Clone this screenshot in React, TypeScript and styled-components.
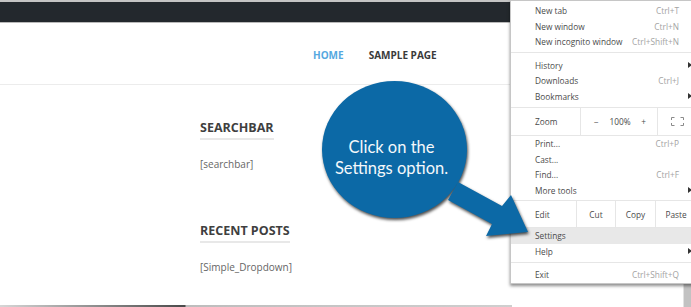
import React from 'react';
import styled, { createGlobalStyle } from 'styled-components';

const GlobalStyle = createGlobalStyle`
  html, body { margin: 0; padding: 0; background: #ffffff; }
  body {
    width: 691px;
    height: 307px;
    overflow: hidden;
    font-family: "Open Sans", "Noto Sans", sans-serif;
  }
`;

const Screen = styled.div`
  position: relative;
  width: 691px;
  height: 307px;
  overflow: hidden;
  display: grid;
  grid-template-columns: 683px 8px;
  background: #ffffff;
`;

const Page = styled.div`
  display: flex;
  flex-direction: column;
  height: 307px;
  min-width: 0;
`;

const TopStrip = styled.div`
  height: 2px;
  background: #c4c4c4;
`;

const AdminBar = styled.div`
  height: 20px;
  background: #23282d;
  border-bottom: 1px solid #b9b9b9;
`;

const Header = styled.header`
  box-sizing: border-box;
  height: 62px;
  padding: 3px 0 0 313px;
  border-bottom: 1px solid #ececec;
  display: flex;
  align-items: center;
  gap: 25px;
`;

const NavLink = styled.a<{ $active?: boolean }>`
  font-family: "Open Sans", "Noto Sans", sans-serif;
  font-weight: 700;
  font-size: 10px;
  line-height: 12px;
  color: ${(p) => (p.$active ? '#55a8df' : '#3a3a3a')};
  text-decoration: none;
`;

const Content = styled.main`
  padding: 35px 0 0 200px;
  display: flex;
  flex-direction: column;
  align-items: flex-start;
`;

const Widget = styled.section`
  display: flex;
  flex-direction: column;
  align-items: flex-start;
  & + & {
    margin-top: 52px;
  }
`;

const WidgetTitle = styled.h3`
  margin: 0;
  padding-bottom: 2.5px;
  border-bottom: 2px solid #e8e8e8;
  font-family: "Open Sans", "Noto Sans", sans-serif;
  font-weight: 700;
  font-size: 12.5px;
  line-height: 15px;
  color: #3f3f3f;
`;

const WidgetBody = styled.p`
  margin: 17.5px 0 0;
  font-family: "Open Sans", "Noto Sans", sans-serif;
  font-size: 10px;
  line-height: 14px;
  color: #666666;
`;

const BottomEdge = styled.div`
  margin-top: auto;
  width: 512px;
  height: 2px;
  background: linear-gradient(to right, #d6d6d6 0, #4a4a4a 185px, #bdbdbd 186px, #cfcfcf 100%);
`;

const Scrollbar = styled.div`
  background: #c2c2c2;
  border-left: 1px solid #e2e2e2;
`;

/* ---------- Chrome menu ---------- */

const Menu = styled.div`
  position: absolute;
  left: 510px;
  top: 0;
  width: 187px;
  background: #ffffff;
  border: 1px solid #c6c6c6;
  box-shadow: 0 2px 3px rgba(0, 0, 0, 0.45);
  font-family: "Open Sans", "Noto Sans", sans-serif;
  font-size: 8.3px;
  color: #4a4a4a;
  z-index: 2;
`;

const Group = styled.div<{ $pt: number; $pb: number }>`
  padding-top: ${(p) => p.$pt}px;
  padding-bottom: ${(p) => p.$pb}px;
`;

const Separator = styled.div`
  height: 1px;
  background: #e6e6e6;
`;

const Item = styled.div<{ $active?: boolean }>`
  display: grid;
  grid-template-columns: 1fr auto 19px;
  align-items: center;
  height: 15.5px;
  padding-left: 24px;
  background: ${(p) => (p.$active ? '#e8e8e8' : 'transparent')};
`;

const Label = styled.span`
  white-space: nowrap;
`;

const Shortcut = styled.span`
  color: #a3a3a3;
  white-space: nowrap;
`;

const SubArrow = styled.span`
  display: flex;
  justify-content: flex-end;
  padding-right: 6px;
`;

const ActionRow = styled.div<{ $h: number }>`
  display: flex;
  height: ${(p) => p.$h}px;
`;

const RowLabel = styled.div<{ $w: number }>`
  box-sizing: border-box;
  width: ${(p) => p.$w}px;
  padding-left: 24px;
  display: flex;
  align-items: center;
`;

const Cell = styled.div<{ $w: number; $spread?: boolean }>`
  box-sizing: border-box;
  width: ${(p) => p.$w}px;
  border-left: 1px solid #e6e6e6;
  display: flex;
  align-items: center;
  justify-content: ${(p) => (p.$spread ? 'space-between' : 'center')};
  padding: ${(p) => (p.$spread ? '0 11px 0 13px' : '0')};
`;

/* ---------- Callout ---------- */

const CalloutArt = styled.svg`
  position: absolute;
  left: 310px;
  top: 78px;
  z-index: 3;
  overflow: visible;
`;

const BubbleText = styled.div`
  position: absolute;
  left: 322px;
  top: 81px;
  width: 145px;
  height: 137px;
  box-sizing: border-box;
  padding: 17px 6px 0 0;
  display: flex;
  align-items: center;
  justify-content: center;
  text-align: center;
  font-family: Lato, "Open Sans", sans-serif;
  font-size: 16.5px;
  line-height: 21px;
  color: #f4f8fb;
  z-index: 4;
`;

const Arrow = () => (
  <svg width="4" height="6" viewBox="0 0 4 6">
    <polygon points="0,0 4,3 0,6" fill="#333" />
  </svg>
);

const FullscreenIcon = () => (
  <svg width="13" height="9" viewBox="0 0 13 9" fill="none" stroke="#8a8a8a" strokeWidth="1">
    <path d="M0.5 3V0.5H3.5M9.5 0.5H12.5V3M12.5 6V8.5H9.5M3.5 8.5H0.5V6" />
  </svg>
);

type Entry = { label: string; shortcut?: string; sub?: boolean; active?: boolean };

const MenuItem = ({ label, shortcut, sub, active }: Entry) => (
  <Item $active={active}>
    <Label>{label}</Label>
    <Shortcut>{shortcut ?? ''}</Shortcut>
    <SubArrow>{sub ? <Arrow /> : null}</SubArrow>
  </Item>
);

const group1: Entry[] = [
  { label: 'New tab', shortcut: 'Ctrl+T' },
  { label: 'New window', shortcut: 'Ctrl+N' },
  { label: 'New incognito window', shortcut: 'Ctrl+Shift+N' },
];
const group2: Entry[] = [
  { label: 'History', sub: true },
  { label: 'Downloads', shortcut: 'Ctrl+J' },
  { label: 'Bookmarks', sub: true },
];
const group3: Entry[] = [
  { label: 'Print...', shortcut: 'Ctrl+P' },
  { label: 'Cast...' },
  { label: 'Find...', shortcut: 'Ctrl+F' },
  { label: 'More tools', sub: true },
];
const group4: Entry[] = [
  { label: 'Settings', active: true },
  { label: 'Help', sub: true },
];

export default function App() {
  return (
    <>
      <GlobalStyle />
      <Screen>
        <Page>
          <TopStrip />
          <AdminBar />
          <Header>
            <NavLink $active>HOME</NavLink>
            <NavLink>SAMPLE PAGE</NavLink>
          </Header>
          <Content>
            <Widget>
              <WidgetTitle>SEARCHBAR</WidgetTitle>
              <WidgetBody>[searchbar]</WidgetBody>
            </Widget>
            <Widget>
              <WidgetTitle>RECENT POSTS</WidgetTitle>
              <WidgetBody>[Simple_Dropdown]</WidgetBody>
            </Widget>
          </Content>
          <BottomEdge />
        </Page>
        <Scrollbar />

        <Menu>
          <Group $pt={2} $pb={2}>
            {group1.map((e) => (
              <MenuItem key={e.label} {...e} />
            ))}
          </Group>
          <Separator />
          <Group $pt={5} $pb={3}>
            {group2.map((e) => (
              <MenuItem key={e.label} {...e} />
            ))}
          </Group>
          <Separator />
          <ActionRow $h={27}>
            <RowLabel $w={69}>Zoom</RowLabel>
            <Cell $w={77} $spread>
              <span>−</span>
              <span>100%</span>
              <span>+</span>
            </Cell>
            <Cell $w={39}>
              <FullscreenIcon />
            </Cell>
          </ActionRow>
          <Separator />
          <Group $pt={0} $pb={2}>
            {group3.map((e) => (
              <MenuItem key={e.label} {...e} />
            ))}
          </Group>
          <Separator />
          <ActionRow $h={26}>
            <RowLabel $w={65}>Edit</RowLabel>
            <Cell $w={39}>Cut</Cell>
            <Cell $w={40}>Copy</Cell>
            <Cell $w={41}>Paste</Cell>
          </ActionRow>
          <Separator />
          <Group $pt={0} $pb={3}>
            {group4.map((e) => (
              <MenuItem key={e.label} {...e} />
            ))}
          </Group>
          <Separator />
          <Group $pt={4} $pb={0.5}>
            <MenuItem label="Exit" shortcut="Ctrl+Shift+Q" />
          </Group>
        </Menu>

        <CalloutArt width="230" height="172" viewBox="0 0 230 172">
          <g fill="#0c69a6" style={{ filter: 'drop-shadow(1px 2px 1.5px rgba(0,0,0,0.7))' }}>
            <ellipse cx="84.5" cy="71.5" rx="72.5" ry="68.5" />
            <polygon points="148,104 192,128 201,117 218,154 176,158 182,146 138,122" />
          </g>
        </CalloutArt>
        <BubbleText>
          Click on the
          <br />
          Settings option.
        </BubbleText>
      </Screen>
    </>
  );
}
